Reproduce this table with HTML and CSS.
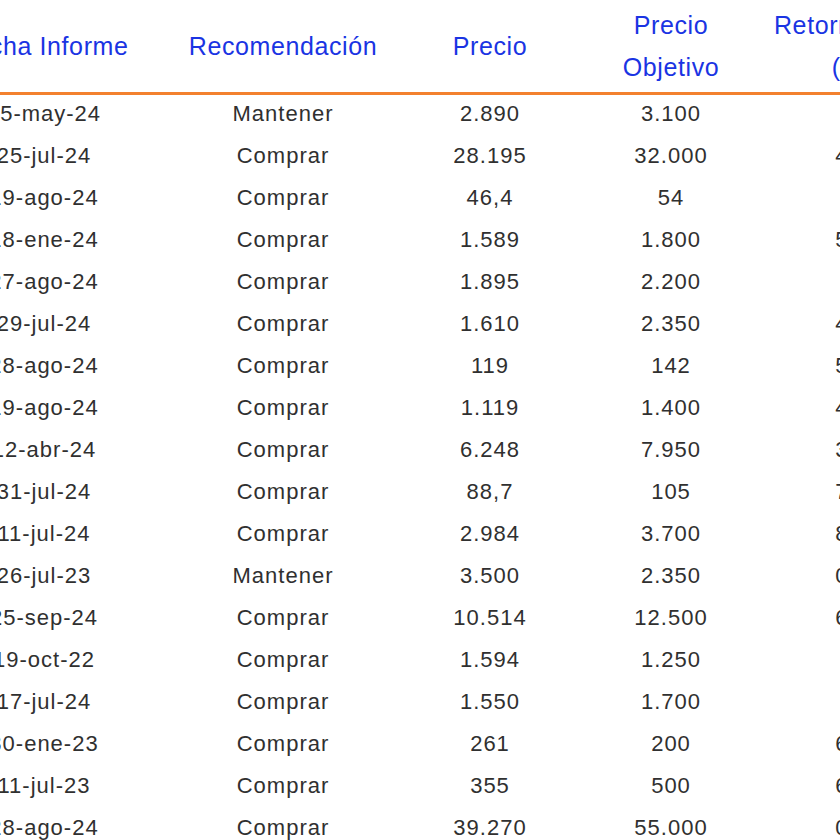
FILE: index.html
```html
<!DOCTYPE html>
<html lang="es">
<head>
<meta charset="utf-8">
<title>Recomendaciones</title>
<link rel="stylesheet" href="styles.css">
</head>
<body>
<div class="viewport">
<table class="recs">
  <colgroup>
    <col class="c-date"><col class="c-rec"><col class="c-price"><col class="c-target"><col class="c-ret">
  </colgroup>
  <thead>
    <tr>
      <th><span class="wide">Fecha Informe</span></th>
      <th>Recomendación</th>
      <th>Precio</th>
      <th>Precio<br>Objetivo</th>
      <th><span class="wide">Retorno Total<br>(%)</span></th>
    </tr>
  </thead>
  <tbody>
    <tr><td>15-may-24</td><td>Mantener</td><td>2.890</td><td>3.100</td><td>7</td></tr>
    <tr><td>25-jul-24</td><td>Comprar</td><td>28.195</td><td>32.000</td><td>4,3</td></tr>
    <tr><td>19-ago-24</td><td>Comprar</td><td>46,4</td><td>54</td><td>9</td></tr>
    <tr><td>18-ene-24</td><td>Comprar</td><td>1.589</td><td>1.800</td><td>5,2</td></tr>
    <tr><td>27-ago-24</td><td>Comprar</td><td>1.895</td><td>2.200</td><td>8</td></tr>
    <tr><td>29-jul-24</td><td>Comprar</td><td>1.610</td><td>2.350</td><td>4,6</td></tr>
    <tr><td>28-ago-24</td><td>Comprar</td><td>119</td><td>142</td><td>5,1</td></tr>
    <tr><td>19-ago-24</td><td>Comprar</td><td>1.119</td><td>1.400</td><td>4,2</td></tr>
    <tr><td>12-abr-24</td><td>Comprar</td><td>6.248</td><td>7.950</td><td>3,7</td></tr>
    <tr><td>31-jul-24</td><td>Comprar</td><td>88,7</td><td>105</td><td>7,1</td></tr>
    <tr><td>11-jul-24</td><td>Comprar</td><td>2.984</td><td>3.700</td><td>8,2</td></tr>
    <tr><td>26-jul-23</td><td>Mantener</td><td>3.500</td><td>2.350</td><td>0,3</td></tr>
    <tr><td>25-sep-24</td><td>Comprar</td><td>10.514</td><td>12.500</td><td>6,1</td></tr>
    <tr><td>19-oct-22</td><td>Comprar</td><td>1.594</td><td>1.250</td><td>2</td></tr>
    <tr><td>17-jul-24</td><td>Comprar</td><td>1.550</td><td>1.700</td><td>9</td></tr>
    <tr><td>30-ene-23</td><td>Comprar</td><td>261</td><td>200</td><td>6,2</td></tr>
    <tr><td>11-jul-23</td><td>Comprar</td><td>355</td><td>500</td><td>6,4</td></tr>
    <tr><td>28-ago-24</td><td>Comprar</td><td>39.270</td><td>55.000</td><td>0,4</td></tr>
  </tbody>
</table>
</div>
</body>
</html>
```
FILE: styles.css
```css
html, body {
  margin: 0;
  padding: 0;
  background: #ffffff;
  overflow: hidden;
}

.viewport {
  width: 840px;
  height: 840px;
  overflow: hidden;
}

.recs {
  margin-left: -52px;
  width: 968px;
  table-layout: fixed;
  border-collapse: collapse;
  font-family: "Liberation Sans", Arial, sans-serif;
  white-space: nowrap;
}

.c-date { width: 192px; }
.c-rec { width: 286px; }
.c-price { width: 128px; }
.c-target { width: 234px; }
.c-ret { width: 128px; }

.recs th {
  height: 92px;
  padding: 0;
  font-size: 25px;
  font-weight: normal;
  line-height: 42px;
  letter-spacing: 0.6px;
  color: #1a34e3;
  text-align: center;
  vertical-align: middle;
  border-bottom: 3px solid #f3812f;
}

.recs th .wide {
  display: inline-block;
  margin: 0 -60px;
}

.recs td {
  height: 38px;
  padding: 0 0 4px 0;
  font-size: 22px;
  line-height: 38px;
  letter-spacing: 1px;
  color: #303030;
  text-align: center;
  vertical-align: top;
}
```
